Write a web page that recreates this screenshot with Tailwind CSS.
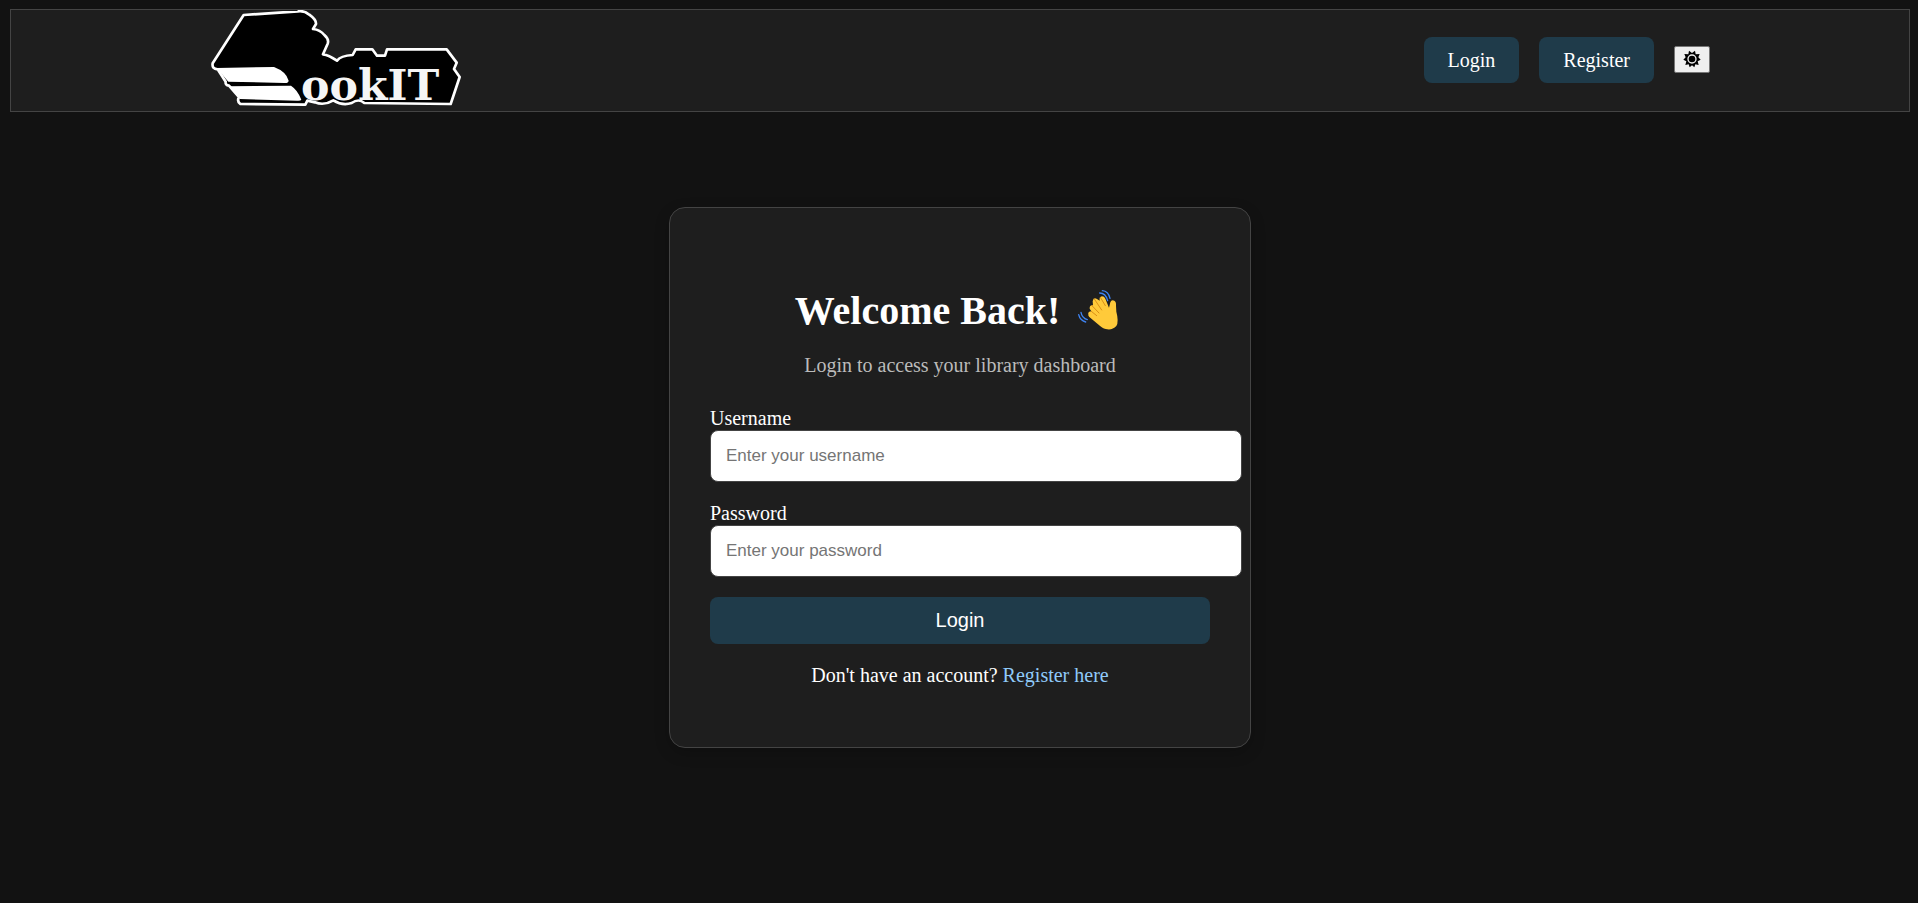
<!DOCTYPE html>
<html lang="en">
<head>
<meta charset="utf-8">
<meta name="viewport" content="width=device-width, initial-scale=1">
<title>BookIT - Login</title>
<script src="https://cdn.jsdelivr.net/npm/@tailwindcss/browser@4"></script>
</head>
<body class="min-h-screen bg-[#121212] pt-[9px] pr-2 pb-2 pl-[10px] font-['Liberation_Serif',serif] text-xl leading-[23px] text-white">
  <header class="border border-[#444] bg-[#1e1e1e]">
    <nav class="mx-auto flex max-w-[1500px] items-center justify-between">
      <a href="#" aria-label="BookIT home">
        <svg class="block h-[101px] w-[252px]" viewBox="27 30 756 303" role="img" aria-label="BookIT">
          <path d="M128 45L290 34Q310 31 325 44Q346 59 345 72L336 87Q357 89 370 105Q385 118 380 131L366 163Q383 165 408 182Q419 167 455 165L464 148H514L528 167H552L558 148H737L767 188L759 207L776 231L749 312L490 309Q473 294 452 309Q424 318 397 301Q369 318 342 307L319 302L313 314L118 312Q107 304 114 291L84 257Q72 255 74 245L50 208Q32 207 35 190Z" fill="#000" stroke="#fff" stroke-width="8" stroke-linejoin="round"/>
          <path d="M47 204L219 201Q256 215 263 242Q262 250 250 249L82 245Z" fill="#fff"/>
          <path d="M83 259L270 257Q290 270 301 299Q299 303 288 302L117 297Z" fill="#fff"/>
          <text x="300" y="300" fill="#f5f5f5" class="font-['DejaVu_Serif',serif] text-[128px] font-bold">ookIT</text>
        </svg>
      </a>
      <div class="flex items-center gap-5 pb-0.5">
        <a href="#login" class="rounded-lg bg-[#1f3b4a] px-6 pt-3 pb-[11px]">Login</a>
        <a href="#register" class="rounded-lg bg-[#1f3b4a] px-6 pt-3 pb-[11px]">Register</a>
        <button type="button" aria-label="Toggle theme" class="flex h-[27px] w-9 items-center justify-center rounded-xs border border-[#767676] bg-[#efefef]">
          <svg class="mb-[2px] size-[18px]" viewBox="0 0 54 54" aria-hidden="true">
            <path d="M18 2L27 9L36 2L38 13L50 12L46 22L53 29L44 34L47 45L37 43L34 52L27 46L20 52L17 43L7 45L10 34L1 29L8 22L4 12L16 13Z" fill="#000"/>
            <circle cx="27" cy="27" r="12" fill="none" stroke="#efefef" stroke-width="4"/>
          </svg>
        </button>
      </div>
    </nav>
  </header>

  <main class="mx-auto mt-[95px] w-full max-w-[582px] rounded-2xl border border-[#444] bg-[#1e1e1e] px-10 pt-20 pb-[60px] shadow-[0_5px_15px_rgba(0,0,0,0.2)]">
    <h1 class="flex items-center justify-center gap-[15px] text-[40px] leading-[46px] font-bold">
      Welcome Back!
      <svg class="h-[46px] w-[50px]" viewBox="45 39 150 138" role="img" aria-label="Waving hand">
        <path d="M85 118Q83 110 94 109L89 101Q88 90 99 91L98 79Q100 66 111 72L119 77Q117 65 126 64Q133 64 136 71L147 98L151 82Q154 73 163 77Q169 80 168 92L169 110Q177 140 169 153Q156 167 137 162Q127 160 114 148L88 126Q84 123 85 118Z" fill="#ffca3a"/>
        <path d="M94 109L110 122M95 91L117 114M103 72L125 105M121 67L136 92" fill="none" stroke="#d98f16" stroke-width="3" stroke-linecap="round"/>
        <path d="M127 47Q145 48 150 70M119 54Q137 54 143 77M63 112Q66 129 82 134M56 119Q60 136 77 141" fill="none" stroke="#3e83f1" stroke-width="4" stroke-linecap="round"/>
      </svg>
    </h1>
    <p class="mt-5 text-center text-[#bbb]">Login to access your library dashboard</p>
    <form>
      <div class="mt-[30px]">
        <label for="username" class="block">Username</label>
        <input id="username" type="text" placeholder="Enter your username" class="block h-[52px] w-[calc(100%+32px)] rounded-lg border border-[#444] bg-white px-[15px] font-['Liberation_Sans',sans-serif] text-[17px] text-black placeholder:text-[#757575]">
      </div>
      <div class="mt-5">
        <label for="password" class="block">Password</label>
        <input id="password" type="password" placeholder="Enter your password" class="block h-[52px] w-[calc(100%+32px)] rounded-lg border border-[#444] bg-white px-[15px] font-['Liberation_Sans',sans-serif] text-[17px] text-black placeholder:text-[#757575]">
      </div>
      <button type="submit" class="mt-5 block h-[47px] w-full rounded-lg bg-[#1f3b4a] font-['Liberation_Sans',sans-serif]">Login</button>
    </form>
    <p class="mt-5 text-center">Don't have an account? <a href="#register" class="text-[#90caf9]">Register here</a></p>
  </main>
</body>
</html>
